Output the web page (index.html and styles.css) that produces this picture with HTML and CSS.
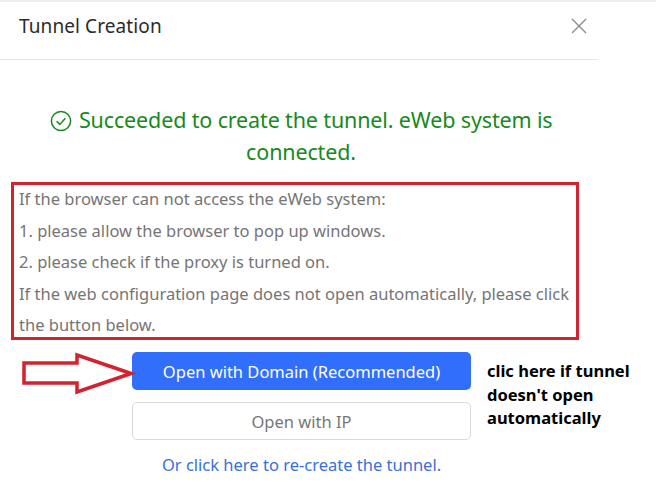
FILE: index.html
```html
<!DOCTYPE html>
<html lang="en">
<head>
<meta charset="utf-8">
<title>Tunnel Creation</title>
<link rel="stylesheet" href="styles.css">
</head>
<body>
<div class="dialog">
  <header class="head">
    <span class="title">Tunnel Creation</span>
    <svg class="close" width="16" height="16" viewBox="0 0 16 16" aria-hidden="true"><path d="M1 1L15 15M15 1L1 15" stroke="#8a8a8a" stroke-width="1.4" fill="none"/></svg>
  </header>
  <div class="result">
    <svg class="ok" width="22" height="22" viewBox="0 0 22 22" aria-hidden="true"><circle cx="11" cy="11" r="9.6" stroke="#178a1c" stroke-width="1.5" fill="none"/><path d="M6.6 11.2L9.8 14.4L15.4 8.2" stroke="#178a1c" stroke-width="1.5" fill="none"/></svg>
    Succeeded to create the tunnel. eWeb system is connected.
  </div>
  <div class="notes">
    <p>If the browser can not access the eWeb system:</p>
    <p>1. please allow the browser to pop up windows.</p>
    <p>2. please check if the proxy is turned on.</p>
    <p>If the web configuration page does not open automatically, please click the button below.</p>
  </div>
  <div class="actions">
    <button class="btn primary">Open with Domain (Recommended)</button>
    <button class="btn plain">Open with IP</button>
    <a class="link" href="#">Or click here to re-create the tunnel.</a>
  </div>
</div>
<svg class="arrow" width="114" height="44" viewBox="0 0 114 44" aria-hidden="true"><path d="M2 11H55V3L109 21.500L55 40V31H2Z" fill="#fff" stroke="#d2232f" stroke-width="3.500"/></svg>
<div class="note">clic here if tunnel doesn't open automatically</div>
</body>
</html>
```
FILE: styles.css
```css
* { box-sizing: border-box; }
html, body { margin: 0; padding: 0; background: #fff; }
body {
  position: relative;
  width: 656px;
  height: 484px;
  overflow: hidden;
  border-top: 2px solid #eeeeee;
  font-family: "Noto Sans", sans-serif;
}
.dialog { width: 598px; }
.head {
  height: 58px;
  display: flex;
  align-items: center;
  justify-content: space-between;
  padding: 0 11px 9px 19px;
  border-bottom: 1px solid #e6e6e6;
}
.title { font-size: 19px; color: #2b2b2b; letter-spacing: 0.1px; }
.result {
  margin: 44px 28px 0 32px;
  font-size: 21.500px;
  line-height: 32px;
  letter-spacing: -0.14px;
  color: #178a1c;
  text-align: center;
}
.ok { vertical-align: -4px; margin-right: 2px; }
.notes {
  width: 568px;
  height: 158px;
  margin: 14px 0 0 11px;
  padding: 0 5px;
  border: 3px solid #d2232f;
  font-size: 16.500px;
  line-height: 31.600px;
  color: #757575;
}
.notes p { margin: 0; }
.notes p:first-child { margin-top: -2px; }
.actions {
  width: 339px;
  margin: 12px 0 0 132px;
  display: flex;
  flex-direction: column;
  align-items: stretch;
  gap: 12px;
}
.btn {
  height: 38px;
  padding: 0;
  border-radius: 5px;
  font: inherit;
  font-size: 16.500px;
}
.primary { background: #316efc; border: 0; color: #fff; }
.plain { background: #fff; border: 1px solid #d9d9d9; color: #777; }
.link {
  margin-top: 2px;
  text-align: center;
  font-size: 16.500px;
  line-height: 22px;
  color: #3a70d8;
  text-decoration: none;
}
.arrow { position: absolute; left: 22px; top: 350px; }
.note {
  position: absolute;
  left: 487px;
  top: 357px;
  width: 165px;
  font-size: 16.500px;
  font-weight: 700;
  line-height: 23.500px;
  color: #000;
}
```
